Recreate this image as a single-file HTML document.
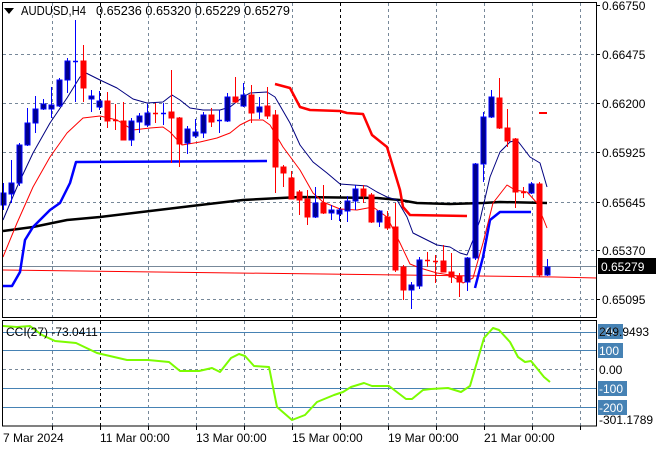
<!DOCTYPE html>
<html><head><meta charset="utf-8"><style>
html,body{margin:0;padding:0;background:#fff;width:660px;height:450px;overflow:hidden}
svg{display:block}
text{font-family:"Liberation Sans",sans-serif;font-size:12px;fill:#000}
</style></head><body>
<svg id="s" width="660" height="450" xmlns="http://www.w3.org/2000/svg">
<rect width="660" height="450" fill="#fff"/>
<g id="grid"></g>
<g id="lines"></g>
<g id="cand"></g>
<rect x="2.5" y="2.5" width="594" height="315" fill="none" stroke="#000" stroke-width="1"/>
<rect x="2.5" y="320.5" width="594" height="105.5" fill="none" stroke="#000" stroke-width="1"/>
<polygon points="4,8 14,8 9,14" fill="#000"/>
<text x="21" y="15" textLength="65" lengthAdjust="spacingAndGlyphs" style="font-size:13px">AUDUSD,H4</text>
<text x="96" y="15" textLength="194" lengthAdjust="spacingAndGlyphs" style="font-size:13px">0.65236 0.65320 0.65229 0.65279</text>
<g id="plab"></g>
<rect x="598" y="258" width="58" height="16" fill="#000"/>
<text x="601" y="271" style="fill:#fff">0.65279</text>
<rect x="598" y="324" width="25" height="15" fill="#4682b4"/>
<text x="599" y="336" style="fill:#fff">200</text>
<text x="599" y="336">249.9493</text>
<rect x="598" y="343" width="25" height="15" fill="#4682b4"/>
<text x="599" y="355" style="fill:#fff">100</text>
<text x="599" y="374">0.00</text>
<rect x="598" y="381" width="29" height="15" fill="#4682b4"/>
<text x="599" y="393" style="fill:#fff">-100</text>
<rect x="598" y="400" width="29" height="15" fill="#4682b4"/>
<text x="599" y="412" style="fill:#fff">-200</text>
<text x="599" y="424">-301.1789</text>
<text x="6" y="336">CCI(27) -73.0411</text>
<text x="3" y="442">7 Mar 2024</text>
<text x="100" y="442">11 Mar 00:00</text>
<text x="196" y="442">13 Mar 00:00</text>
<text x="292" y="442">15 Mar 00:00</text>
<text x="388" y="442">19 Mar 00:00</text>
<text x="484" y="442">21 Mar 00:00</text>
</svg>
<script>
var NS="http://www.w3.org/2000/svg";
function el(p,t,a){var e=document.createElementNS(NS,t);for(var k in a)e.setAttribute(k,a[k]);document.getElementById(p).appendChild(e);return e;}
[52,100,148,196,244,292,340,388,436,484,532,580].forEach(function(x){
 var blk=(x==100||x==340);
 el("grid","line",{x1:x+.5,y1:3,x2:x+.5,y2:317,stroke:blk?"#000":"#778899","stroke-dasharray":"3,3"});
 el("grid","line",{x1:x+.5,y1:321,x2:x+.5,y2:426,stroke:blk?"#000":"#778899","stroke-dasharray":"3,3"});
 el("grid","line",{x1:x+.5,y1:426,x2:x+.5,y2:430,stroke:"#000"});
});
var py=[[5,"0.66750"],[54,"0.66475"],[103,"0.66200"],[152,"0.65925"],[202,"0.65645"],[250,"0.65370"],[299,"0.65095"]];
py.forEach(function(p){
 if(p[0]>6) el("grid","line",{x1:3,y1:p[0]+.5,x2:596,y2:p[0]+.5,stroke:"#778899","stroke-dasharray":"3,3"});
 el("grid","line",{x1:596,y1:p[0]+.5,x2:600,y2:p[0]+.5,stroke:"#000"});
 var t=el("plab","text",{x:602,y:p[0]+5});t.textContent=p[1];
});
[332,350,388,407].forEach(function(y){el("grid","line",{x1:3,y1:y+.5,x2:596,y2:y+.5,stroke:"#4682b4"});});
el("grid","line",{x1:3,y1:369.5,x2:596,y2:369.5,stroke:"#778899","stroke-dasharray":"3,3"});
el("grid","line",{x1:3,y1:266.5,x2:596,y2:266.5,stroke:"#778899"});
function pl(pts,c,w){el("lines","polyline",{points:pts,fill:"none",stroke:c,"stroke-width":w,"stroke-linejoin":"round"});}
pl("3,270 555,277 597,278","#ff0000",1);
pl("3,231 33,227 67,220 100,217 150,211 200,205 243,200 300,197 377,198 400,200 417,203 450,204 483,203 500,202 547,203","#000",2.5);
pl("3,286 12,286 20,272 25,240 33,227 50,210 60,203 70,183 76,162 267,161","#0000ff",2.5);
pl("475,288 483,257 490,220 500,212 531,212","#0000ff",2.5);
pl("275,84 290,88 300,107 310,110 340,111 347,113 363,114 372,135 387,147 400,190 403,207 410,215 467,216","#ff0000",2.5);
pl("539,113 547,113","#ff0000",2);
pl("3,220 17,187 33,153 50,123 67,98 80,77 86,73 100,80 117,88 133,99 147,103 163,102 172,95 180,100 190,108 203,110 220,110 230,107 243,97 250,93 267,92 275,97 290,123 300,145 313,162 327,173 340,184 367,186 377,192 387,197 397,200 407,217 413,233 427,240 437,245 450,247 460,253 467,255 473,240 480,220 490,177 500,152 510,142 517,140 530,157 540,163 547,187","#000080",1);
pl("3,257 17,223 33,187 50,157 67,133 83,118 100,116 117,120 133,130 150,128 163,127 170,132 182,145 200,142 217,138 230,133 240,125 250,120 263,120 270,125 283,147 300,170 313,193 323,202 340,209 357,210 373,207 387,217 400,243 410,264 420,268 437,273 450,275 463,283 473,278 483,243 493,203 507,185 515,190 527,192 537,203 547,228","#ff0000",1);
pl("3,326 17,327 30,326 42,335 55,341 76,343 97,353 127,360 148,360 169,362 180,371 199,371 212,368 220,372 231,358 239,354 245,356 254,366 269,367 277,407 292,420 305,415 317,402 334,395 343,392 351,387 364,383 372,386 389,386 406,399 412,399 423,390 431,389 448,388 461,392 470,386 484,338 493,328 499,330 510,342 518,357 525,362 531,361 544,377 550,382","#7cfc00",2);
var C=[[193,205,183,210,'b'],[183,194,160,203,'b'],[145,183,143,186,'b'],[123,145,108,146,'b'],[109,123,96,133,'b'],[104,109,99,110,'b'],[105,109,87,118,'b'],[80,106,78,107,'b'],[61,80,58,93,'b'],[61,62,20,102,'b'],[61,88,45,102,'r'],[96,99,90,112,'b'],[101,107,91,110,'b'],[101,121,92,128,'r'],[120,121,104,130,'r'],[121,140,102,140,'r'],[121,140,118,146,'b'],[116,122,113,133,'b'],[113,125,104,127,'b'],
[113,114,103,123,'r'],[113,114,103,125,'b'],[112,118,70,163,'r'],[118,144,117,167,'r'],[129,143,126,154,'b'],[132,136,119,138,'b'],[115,133,112,138,'b'],[115,122,108,127,'r'],[120,121,110,133,'b'],[97,121,93,122,'b'],[97,102,77,103,'r'],[95,106,83,107,'b'],[95,113,85,123,'r'],[107,112,97,119,'b'],[106,116,87,119,'r'],[115,167,110,193,'r'],[167,173,165,187,'r'],[178,199,171,199,'r'],[192,200,190,215,'r'],
[199,217,190,225,'r'],[203,217,187,218,'b'],[203,213,185,214,'r'],[210,213,205,220,'b'],[210,214,208,221,'b'],[201,211,196,222,'b'],[189,201,185,210,'b'],[189,196,185,203,'r'],[195,222,193,223,'r'],[211,222,210,227,'b'],[217,228,211,230,'r'],[227,270,203,272,'r'],[267,290,265,300,'r'],[285,290,282,309,'b'],[260,286,257,289,'b'],[260,261,252,267,'r'],[261,262,255,283,'r'],[261,272,245,272,'r'],
[272,277,253,283,'r'],[276,282,273,297,'r'],[258,282,257,291,'b'],[164,258,163,260,'b'],[117,164,112,182,'b'],[97,117,90,118,'b'],[98,128,78,129,'r'],[128,141,109,147,'r'],[139,192,138,208,'r'],[192,193,187,198,'r'],[184,193,182,194,'b'],[184,275,182,277,'r'],[267,275,259,276,'b']];
C.forEach(function(c,k){
 var x=3.5+8*k,col=c[4]=='b'?'#0000ff':'#ff0000',fill=c[4]=='b'?'#00008b':'#ff0000';
 el("cand","line",{x1:x,y1:c[2],x2:x,y2:c[3],stroke:col,"stroke-width":1});
 var h=Math.max(c[1]-c[0],1);
 if(h<=1) el("cand","line",{x1:x-2.5,y1:c[0]+.5,x2:x+2.5,y2:c[0]+.5,stroke:col,"stroke-width":1.5});
 else el("cand","rect",{x:x-2.5,y:c[0],width:5,height:h,fill:fill,stroke:col,"stroke-width":1});
});
</script>
</body></html>
